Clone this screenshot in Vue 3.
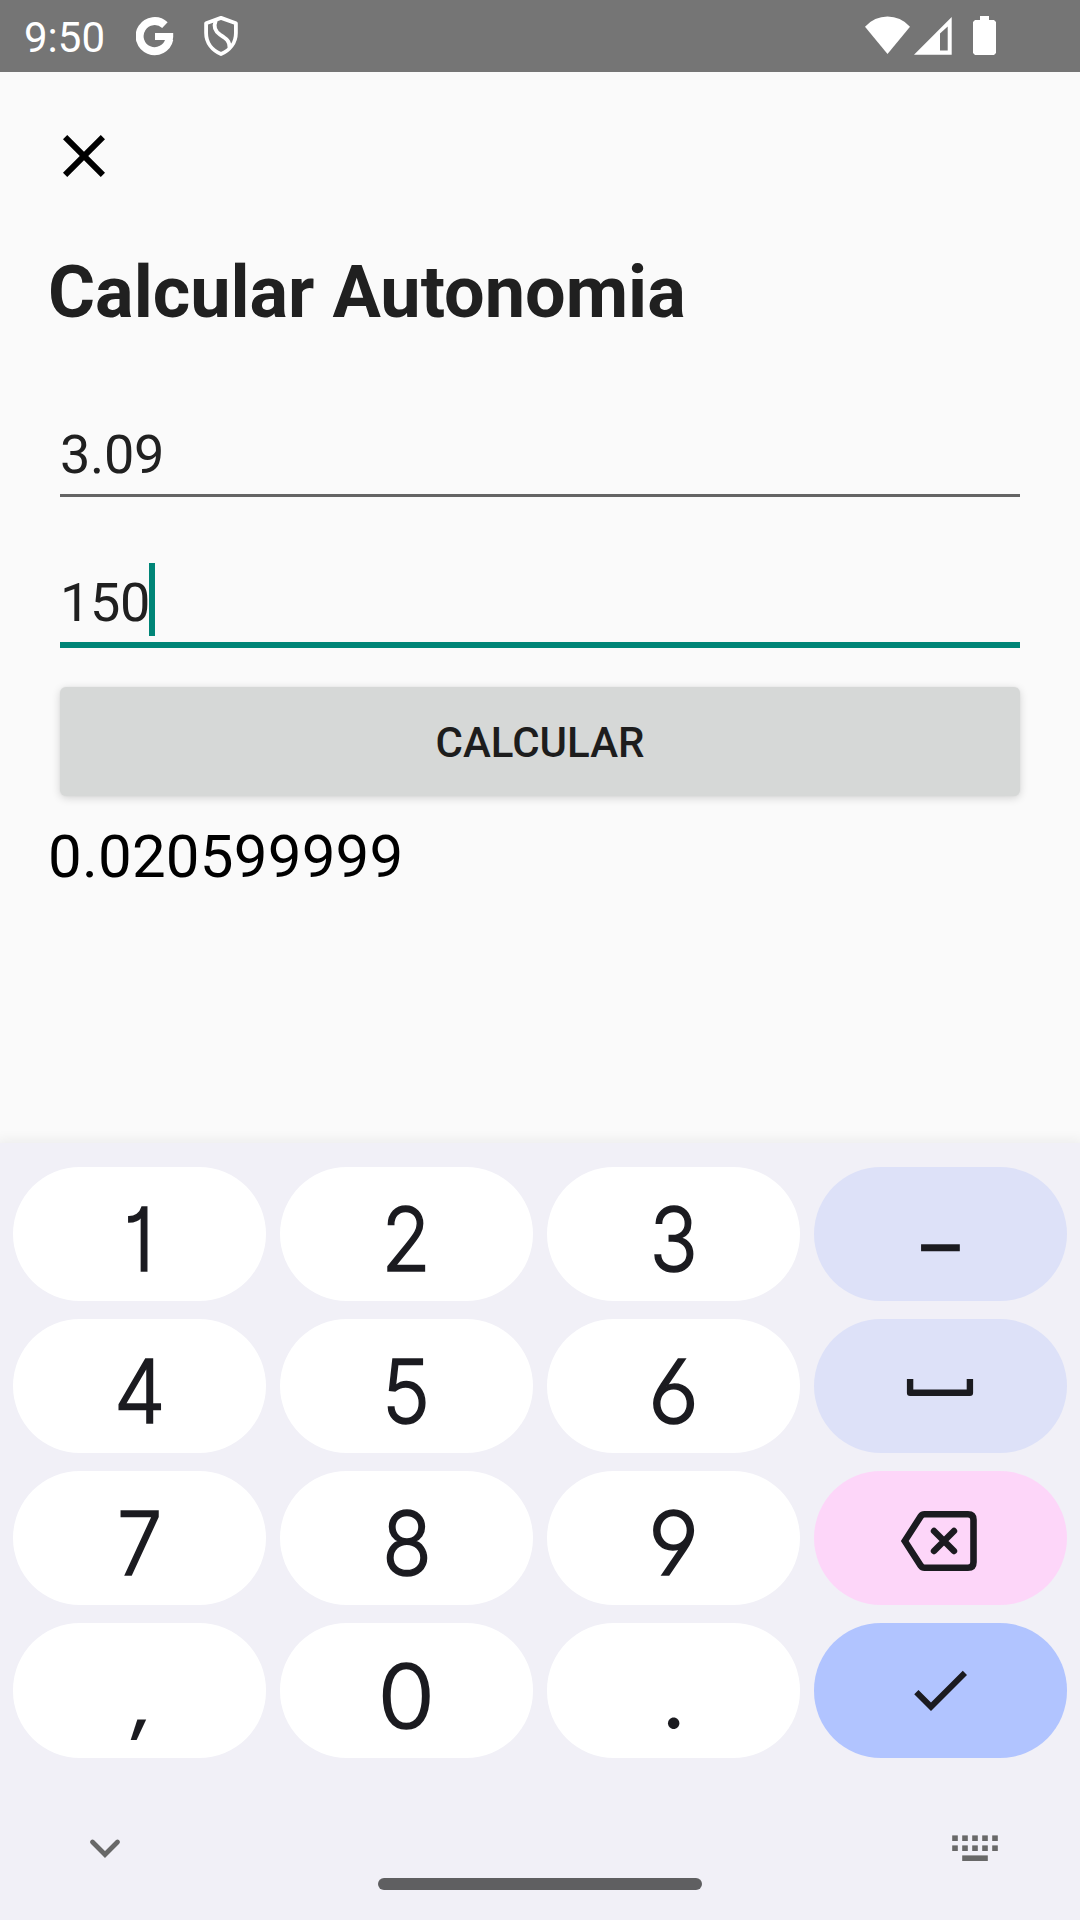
<script setup>
import { ref } from 'vue'

const consumo = ref('3.09')
const distancia = ref('150')
const resultado = ref('0.020599999')

const keys = [
  { label: '1', sx: 0.9 },
  { label: '2', sx: 0.91 },
  { label: '3', sx: 0.9 },
  { label: '–', sx: 0.85, tone: 'soft', glyph: 'dash' },
  { label: '4', sx: 0.93 },
  { label: '5', sx: 0.92 },
  { label: '6', sx: 1 },
  { icon: 'space', tone: 'soft' },
  { label: '7', sx: 0.92 },
  { label: '8', sx: 0.92 },
  { label: '9', sx: 1 },
  { icon: 'backspace', tone: 'pink' },
  { label: ',', sx: 1, glyph: 'comma' },
  { label: '0', sx: 1.05 },
  { label: '.', sx: 0.98, glyph: 'point' },
  { icon: 'done', tone: 'blue' },
]
</script>

<template>
  <div class="screen">
    <header class="status">
      <span class="clock">9:50</span>
      <svg class="g-icon" width="38" height="40" viewBox="136 16 38 40">
        <path d="M164.9 25.2A15 15 0 1 0 169.3 39.2" fill="none" stroke="#fff" stroke-width="8" />
        <path d="M155 33h18.2q.2 3.5-.5 7H155z" fill="#fff" />
      </svg>
      <svg class="shield" width="36" height="42" viewBox="203 15 36 42">
        <g fill="none" stroke="#fff" stroke-width="3.8" stroke-linejoin="round">
          <path d="M221 17.9L235.9 23.2V33C235.9 43 229.5 50.5 221 54.1C212.5 50.5 206.1 43 206.1 33V23.2Z" />
          <path d="M215.8 20.5C213.3 26.5 214.8 31 220 34.6C226.5 38.8 229.8 41 229.6 48" />
        </g>
      </svg>
      <svg class="system" width="134" height="42" viewBox="864 15 134 42">
        <g fill="#fff">
          <path d="M887.5 54L865 26.7Q874.5 16.6 887.5 16.6T910 26.7Z" />
          <path fill-rule="evenodd" d="M914 54.7L951.7 17V54.7ZM940 33.5V50.5H947.7V26.5Z" />
          <path d="M980 16h9v4h5l2 2v31l-2 2h-19l-2-2V22l2-2h5z" />
        </g>
      </svg>
    </header>

    <main class="content">
      <svg class="close" width="72" height="72" viewBox="0 0 24 24">
        <path d="M19 6.41L17.59 5 12 10.59 6.41 5 5 6.41 10.59 12 5 17.59 6.41 19 12 13.41 17.59 19 19 17.59 13.41 12z" />
      </svg>
      <h1 class="title">Calcular Autonomia</h1>
      <div class="field">{{ consumo }}</div>
      <div class="field focused">{{ distancia }}<i class="cursor"></i></div>
      <button class="calc" type="button">CALCULAR</button>
      <p class="result">{{ resultado }}</p>
    </main>

    <section class="keyboard">
      <div class="keys">
        <div v-for="(key, i) in keys" :key="i" class="key" :class="key.tone">
          <span
            v-if="key.label"
            class="glyph"
            :class="key.glyph"
            :style="{ '--sx': key.sx }"
          >{{ key.label }}</span>
          <svg v-else-if="key.icon === 'space'" class="space" width="68" height="20" viewBox="0 0 68 20">
            <path d="M4.1 2v13.8h59.8V2" fill="none" stroke="#1b1b20" stroke-width="6.4" stroke-linejoin="round" />
          </svg>
          <svg v-else-if="key.icon === 'backspace'" class="back" width="78" height="62" viewBox="0 0 78 62">
            <g fill="none" stroke="#1b1b20" stroke-width="6.6">
              <path d="M4.8 31L20.8 6.2Q22.2 4.3 24.5 4.3H68Q73.5 4.3 73.5 9.8V52.2Q73.5 57.7 68 57.7H24.5Q22.2 57.7 20.8 55.8Z" />
              <path d="M34 20.9L54 41.1M54 20.9L34 41.1" stroke-width="6.4" stroke-linecap="round" />
            </g>
          </svg>
          <svg v-else class="done" width="72" height="72" viewBox="0 0 24 24">
            <path fill="#1b1b20" d="M9 16.17L4.83 12l-1.42 1.41L9 19 21 7l-1.41-1.41z" />
          </svg>
        </div>
      </div>
      <div class="tools">
        <svg width="60" height="60" viewBox="0 0 60 60">
          <path d="M17.5 24L30 36.5L42.5 24" fill="none" stroke="#686868" stroke-width="4.8" stroke-linecap="round" />
        </svg>
        <svg width="60" height="60" viewBox="0 0 60 60" fill="#686868">
          <template v-for="row in 2" :key="row">
            <rect
              v-for="col in 5"
              :key="col"
              :x="col * 10 - 2.8"
              :y="row * 10 + 7.4"
              width="5.6"
              height="5.6"
            />
          </template>
          <rect x="17.2" y="37.4" width="25.6" height="5.6" />
        </svg>
      </div>
      <div class="home"></div>
    </section>
  </div>
</template>

<style>
body {
  margin: 0;
}
</style>

<style scoped>
.screen {
  width: 1080px;
  height: 1920px;
  display: flex;
  flex-direction: column;
  overflow: hidden;
  background: #fafafa;
  font-family: Roboto, "Liberation Sans", sans-serif;
}

.status {
  display: flex;
  align-items: flex-start;
  height: 72px;
  padding: 0 82px 0 24px;
  box-sizing: border-box;
  background: #757575;
}

.clock {
  width: 112px;
  margin-top: 2px;
  color: #fff;
  font-size: 42px;
  line-height: 72px;
}

.g-icon {
  margin-top: 16px;
}

.shield {
  margin: 15px 0 0 29px;
}

.system {
  margin: 15px 0 0 auto;
}

.content {
  flex: 1;
  display: flex;
  flex-direction: column;
  padding: 48px 48px 0;
}

.close {
  display: block;
}

.title {
  margin: 59px 0 0;
  color: #202020;
  font-size: 72px;
  font-weight: 700;
  line-height: 84px;
}

.field {
  position: relative;
  margin: 88px 12px 0;
  padding-bottom: 7px;
  border-bottom: 3px solid #646464;
  color: #202020;
  font-size: 54px;
  line-height: 64px;
  letter-spacing: -0.3px;
}

.field.focused {
  margin-top: 74px;
  border-bottom: 6px solid #008577;
}

.cursor {
  position: absolute;
  left: 89px;
  top: -8px;
  width: 6px;
  height: 73px;
  background: #008577;
}

.calc {
  height: 109px;
  margin: 39px 12px 0;
  padding: 2px 0 0;
  border: 0;
  border-radius: 6px;
  background: #d6d8d7;
  box-shadow: 0 2px 8px rgba(0, 0, 0, 0.16), 0 0 2px rgba(0, 0, 0, 0.05);
  color: #1d1d1d;
  font-family: inherit;
  font-size: 42px;
  font-weight: 500;
}

.result {
  margin: 26px 0 0;
  color: #000;
  font-size: 60px;
  line-height: 70px;
  letter-spacing: 0.22px;
}

.keyboard {
  height: 777px;
  padding-top: 24px;
  box-sizing: border-box;
  background: #f1f0f7;
  box-shadow: 0 0 12px 3px rgba(0, 0, 0, 0.06);
}

.keys {
  display: grid;
  grid-template-columns: repeat(4, 253px);
  grid-template-rows: 134px 134px 134px 135px;
  gap: 18px 14px;
  padding: 0 13px;
}

.key {
  display: flex;
  align-items: center;
  justify-content: center;
  border-radius: 67px;
  background: #fff;
}

.key.soft {
  background: #dde1f8;
}

.key.pink {
  background: #fdd6f9;
}

.key.blue {
  background: #b1c4ff;
}

.glyph {
  color: #1b1b20;
  font-family: Inter, "Open Sans", sans-serif;
  font-size: 88px;
  font-weight: 300;
  line-height: 134px;
  font-feature-settings: "cv01", "cv03", "cv04";
  -webkit-text-stroke: 1.6px #1b1b20;
  transform: translateY(4.5px) scaleX(var(--sx));
}

.glyph.dash {
  transform: translate(-0.5px, 9px) scaleX(var(--sx));
}

.glyph.comma {
  font-weight: 400;
  -webkit-text-stroke: 0;
  transform-origin: 50% 100px;
  transform: translateY(4px) skewX(-8deg) scale(var(--sx), 0.84);
}

.glyph.point {
  font-weight: 400;
  -webkit-text-stroke: 0;
}

.space {
  margin: 2px 1px 0 0;
}

.back {
  margin: 6px 3px 0 0;
}

.done {
  margin: 0 2px 1px 0;
}

.tools {
  display: flex;
  justify-content: space-between;
  height: 60px;
  padding: 60px 75px 0;
}

.home {
  width: 324px;
  height: 12px;
  margin: 0 auto;
  border-radius: 6px;
  background: #5f5f61;
}
</style>
